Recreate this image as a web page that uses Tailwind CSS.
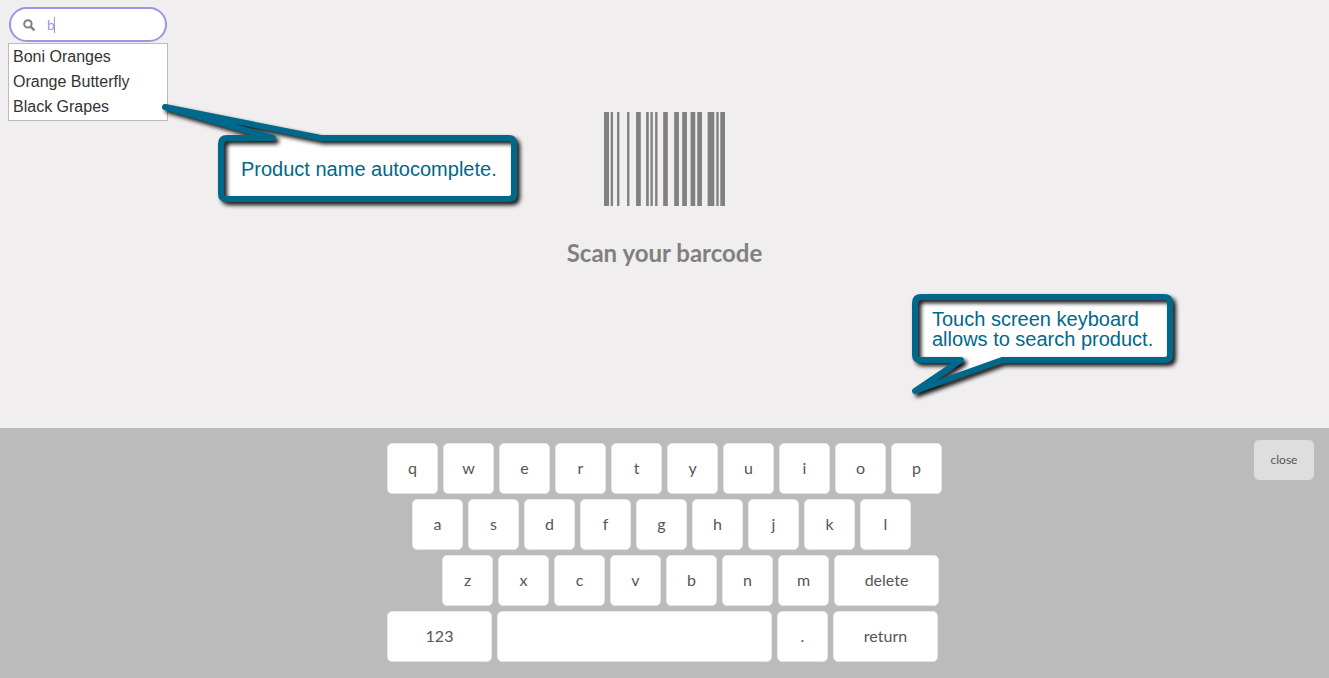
<!DOCTYPE html>
<html lang="en">
<head>
<meta charset="utf-8">
<meta name="viewport" content="width=device-width, initial-scale=1">
<title>Scan your barcode</title>
<script src="https://cdn.jsdelivr.net/npm/@tailwindcss/browser@4"></script>
</head>
<body class="relative flex min-h-screen flex-col overflow-x-hidden bg-[#f0eeef] font-['Lato',sans-serif] text-[#555]">

<main class="relative grow">
  <!-- Product search -->
  <form class="absolute top-[7px] left-2 w-40" onsubmit="return false">
    <label class="mx-px flex h-[35px] items-center rounded-full border-2 border-[#9d94e6] bg-white pl-3">
      <svg class="size-3 shrink-0" viewBox="0 0 12 12" fill="none" stroke="#808080" stroke-width="2" aria-hidden="true">
        <circle cx="4.9" cy="4.9" r="3.7"/><path d="M7.8 7.8 10.7 10.7" stroke-width="2.4" stroke-linecap="round"/>
      </svg>
      <span class="relative ml-3 flex grow">
        <input type="text" value="b" autocomplete="off" aria-label="Search product" class="w-24 bg-transparent text-sm text-[#9d94e6] outline-none">
        <span class="absolute top-0.5 left-[7px] h-4 w-px bg-[#9d94e6]"></span>
      </span>
    </label>
    <ul class="mt-px border border-[#bbb] bg-white px-1 pb-px font-['Liberation_Sans',sans-serif] text-base text-[#333]">
      <li class="h-[25px] leading-[25px]">Boni Oranges</li>
      <li class="h-[25px] leading-[25px]">Orange Butterfly</li>
      <li class="h-[25px] leading-[25px]">Black Grapes</li>
    </ul>
  </form>

  <!-- Scan prompt -->
  <section class="flex flex-col items-center pt-28">
    <svg class="h-[94px] w-[121px]" viewBox="0 0 362 283" preserveAspectRatio="none" fill="#808080" aria-hidden="true">
      <path d="M0 0h15v283H0zM20 0h7v283h-7zM39 0h7v283h-7zM69 0h7v283h-7zM96 0h14v283H96zM126 0h8v283h-8zM139 0h7v283h-7zM153 0h7v283h-7zM177 0h14v283h-14zM210 0h14v283h-14zM234 0h14v283h-14zM259 0h14v283h-14zM279 0h14v283h-14zM310 0h20v283h-20zM336 0h7v283h-7zM348 0h14v283h-14z"/>
    </svg>
    <h1 class="mt-8 text-2xl leading-[30px] font-bold text-[#808080]">Scan your barcode</h1>
  </section>

  <!-- Callouts -->
  <aside class="absolute top-[95px] left-[155px] h-[120px] w-[380px] font-['Liberation_Sans',sans-serif] text-xl text-[#00688b]">
    <svg class="absolute inset-0 size-full overflow-visible" viewBox="155 95 380 120" stroke-linejoin="round" aria-hidden="true">
      <path fill="#fff" d="M227 138H273L165 107 321 138H509Q514 138 514 144V194Q514 199 509 199H227Q221 199 221 194V144Q221 138 227 138Z"/>
      <path class="drop-shadow-[3px_3px_2px_rgba(0,0,0,0.95)]" fill="none" stroke="#00688b" stroke-width="6" d="M227 138H273L165 107 321 138H509Q514 138 514 144V194Q514 199 509 199H227Q221 199 221 194V144Q221 138 227 138Z"/>
    </svg>
    <p class="absolute top-16 left-[86px] leading-5 whitespace-nowrap">Product name autocomplete.</p>
  </aside>
  <aside class="absolute top-[285px] left-[900px] h-[120px] w-[285px] font-['Liberation_Sans',sans-serif] text-xl text-[#00688b]">
    <svg class="absolute inset-0 size-full overflow-visible" viewBox="900 285 285 120" stroke-linejoin="round" aria-hidden="true">
      <path fill="#fff" d="M921 297H1164Q1170 297 1170 303V355Q1170 360 1165 360H1002L915 391 961 360H921Q915 360 915 355V303Q915 297 921 297Z"/>
      <path class="drop-shadow-[3px_3px_2px_rgba(0,0,0,0.95)]" fill="none" stroke="#00688b" stroke-width="6" d="M921 297H1164Q1170 297 1170 303V355Q1170 360 1165 360H1002L915 391 961 360H921Q915 360 915 355V303Q915 297 921 297Z"/>
    </svg>
    <p class="absolute top-6 left-8 leading-5 whitespace-nowrap">Touch screen keyboard<br>allows to search product.</p>
  </aside>
</main>

<!-- On-screen keyboard -->
<footer class="relative flex h-[250px] justify-center bg-[#bbb] pt-[15px]">
  <div class="flex w-[555px] flex-col gap-[5px] text-base *:flex *:h-[51px] *:gap-[5px] [&_button]:w-[51px] [&_button]:shrink-0 [&_button]:rounded-[5px] [&_button]:border [&_button]:border-[#e6e6e6] [&_button]:bg-white [&_button]:pb-0.5">
    <div>
      <button>q</button><button>w</button><button>e</button><button>r</button><button>t</button><button>y</button><button>u</button><button>i</button><button>o</button><button>p</button>
    </div>
    <div class="pl-[25px]">
      <button>a</button><button>s</button><button>d</button><button>f</button><button>g</button><button>h</button><button>j</button><button>k</button><button>l</button>
    </div>
    <div class="pl-[55px]">
      <button>z</button><button>x</button><button>c</button><button>v</button><button>b</button><button>n</button><button>m</button><button class="w-[105px]!">delete</button>
    </div>
    <div>
      <button class="w-[105px]!">123</button><button class="w-[275px]!" aria-label="space"></button><button>.</button><button class="w-[105px]!">return</button>
    </div>
  </div>
  <button class="absolute top-3 right-[15px] h-10 w-[60px] rounded-[5px] bg-[#dedede] text-xs">close</button>
</footer>

</body>
</html>
